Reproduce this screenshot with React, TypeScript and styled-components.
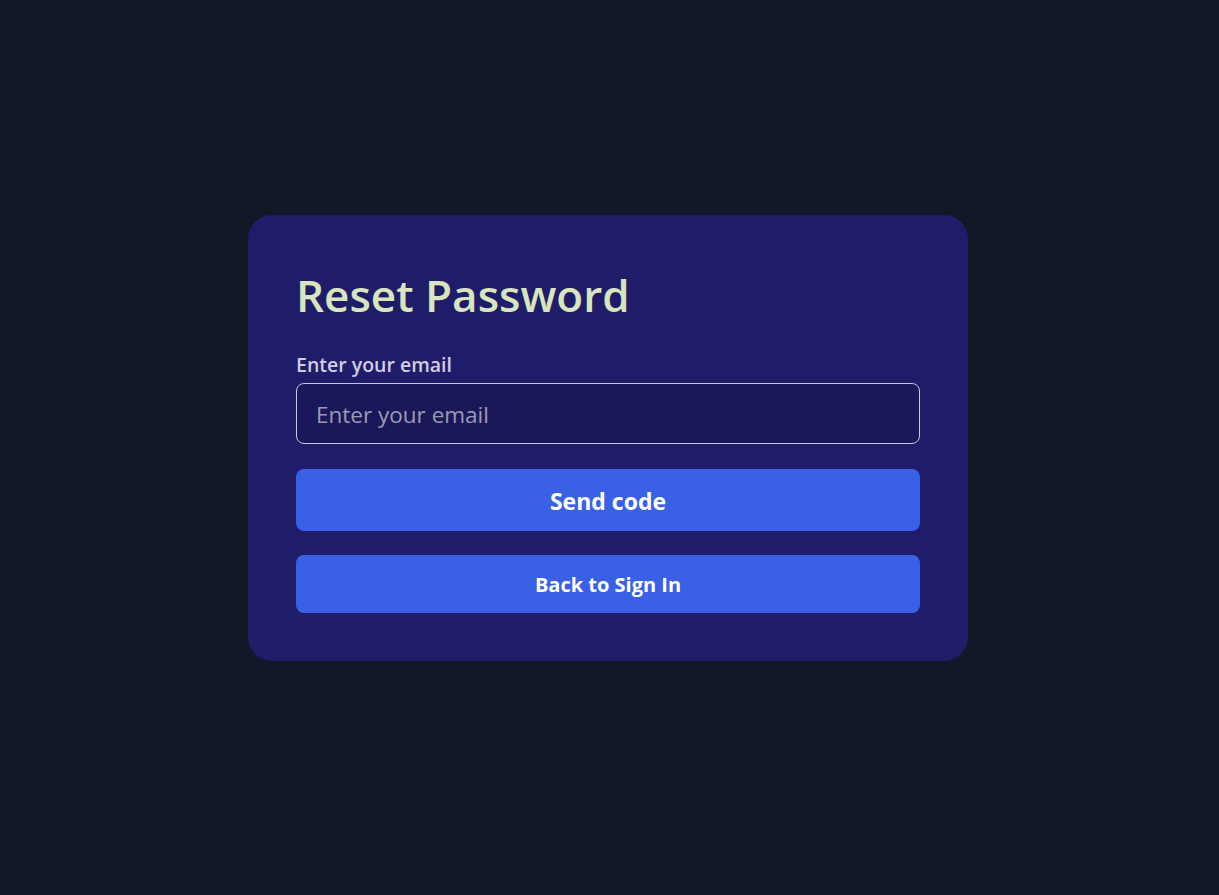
import React from "react";
import styled, {createGlobalStyle} from "styled-components";

const GlobalStyle = createGlobalStyle`
  html, body {
    margin: 0;
    padding: 0;
    background: #121827;
    font-family: "Open Sans", "Noto Sans", sans-serif;
  }
  * { box-sizing: border-box; }
`;

const Page = styled.main`
  min-height: 895px;
  display: flex;
  align-items: center;
  justify-content: center;
  padding: 0 3px 19px 0;
`;

const Card = styled.form`
  width: 720px;
  padding: 48px;
  background: #1f1d6a;
  border-radius: 24px;
  display: flex;
  flex-direction: column;
`;

const Title = styled.h1`
  margin: 0 0 26px;
  padding-top: 2px;
  font-size: 44px;
  line-height: 60px;
  font-weight: 600;
  color: #d8e5bd;
`;

const Label = styled.label`
  font-size: 19.5px;
  line-height: 28px;
  font-weight: 600;
  color: #d2cde0;
  margin-bottom: 4px;
`;

const Input = styled.input`
  height: 61px;
  width: 100%;
  padding: 2px 19px 0;
  border: 1px solid #c9c8dc;
  border-radius: 8px;
  background: #1a1858;
  color: #e5e7eb;
  font-family: inherit;
  font-size: 22.5px;
  outline: none;
  margin-bottom: 25px;
  &::placeholder {
    color: #9a9cb4;
  }
`;

const Button = styled.button<{$big?: boolean}>`
  height: ${p => (p.$big ? 62 : 58)}px;
  width: 100%;
  padding-top: 2px;
  border: none;
  border-radius: 8px;
  background: #3a60e6;
  color: #ffffff;
  font-family: inherit;
  font-weight: 700;
  font-size: ${p => (p.$big ? 23 : 20)}px;
  cursor: pointer;
  & + & {
    margin-top: 24px;
  }
`;

function App() {
    return (
        <>
            <GlobalStyle/>
            <Page>
                <Card onSubmit={e => e.preventDefault()}>
                    <Title>Reset Password</Title>
                    <Label htmlFor="email">Enter your email</Label>
                    <Input id="email" type="email" placeholder="Enter your email"/>
                    <Button $big type="submit">Send code</Button>
                    <Button type="button">Back to Sign In</Button>
                </Card>
            </Page>
        </>
    );
}

export default App;
